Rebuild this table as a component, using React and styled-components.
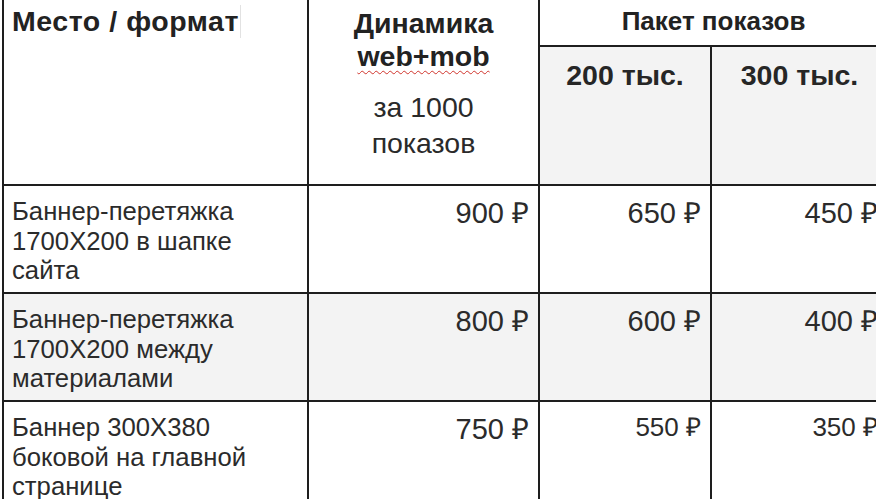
import React from "react";
import styled, { createGlobalStyle } from "styled-components";

const Global = createGlobalStyle`
  html, body {
    margin: 0;
    padding: 0;
    background: #ffffff;
    overflow: hidden;
  }
  body {
    font-family: "Liberation Sans", Arial, sans-serif;
    color: #262626;
  }
`;

const Page = styled.div`
  width: 876px;
  height: 499px;
  overflow: hidden;
  padding-left: 2px;
  box-sizing: border-box;
`;

const Table = styled.table`
  border-collapse: collapse;
  table-layout: fixed;
  width: 885px;
`;

const Cell = styled.td`
  border: 2px solid #1e1e1e;
  padding: 0;
  vertical-align: top;
  background: ${(p) => (p.$shade ? "#f3f3f3" : "#ffffff")};
  text-align: ${(p) => p.$align || "left"};
`;

const HeadCell = styled(Cell).attrs({ as: "th" })`
  border-top: none;
  font-weight: bold;
  color: #222;
`;

const TopRow = styled.tr`
  height: 46px;
`;

const SubRow = styled.tr`
  height: 139px;
`;

const BodyRow = styled.tr`
  height: 108px;
`;

const PlaceTitle = styled.div`
  padding: 5px 0 0 8px;
  font-size: 28.5px;
  letter-spacing: 0.55px;
`;

const Caret = styled.span`
  display: inline-block;
  border-right: 1px solid #e2e2e2;
  padding-right: 1px;
  line-height: 33px;
`;

const DynTitle = styled.div`
  padding-top: 7px;
  font-size: 28.5px;
  line-height: 33px;
`;

const Spell = styled.span`
  text-decoration: underline wavy #d0342c;
  text-decoration-thickness: 1px;
  text-underline-offset: 4px;
`;

const DynNote = styled.div`
  font-weight: normal;
  line-height: 36px;
  margin-top: 16px;
  color: #2a2a2a;
`;

const PackTitle = styled.div`
  font-size: 26px;
  line-height: 30px;
  padding-top: 6px;
`;

const ColTitle = styled.div`
  padding-top: 12px;
  font-size: 28.5px;
  line-height: 32px;
`;

const Name = styled.div`
  padding: 11px 10px 0 8px;
  font-size: 25.7px;
  line-height: 29.5px;
  color: #2b2b2b;
`;

const Price = styled.div`
  padding: ${(p) => (p.$small ? "10px" : "12px")} 9px 0 0;
  line-height: 30px;
  color: #2b2b2b;
  font-size: ${(p) => (p.$small ? "26px" : "29px")};
`;

const rows = [
  {
    name: ["Баннер-перетяжка", "1700X200 в шапке", "сайта"],
    prices: ["900 ₽", "650 ₽", "450 ₽"],
    shade: false,
    small: false,
  },
  {
    name: ["Баннер-перетяжка", "1700X200 между", "материалами"],
    prices: ["800 ₽", "600 ₽", "400 ₽"],
    shade: true,
    small: false,
  },
  {
    name: ["Баннер 300X380", "боковой на главной", "странице"],
    prices: ["750 ₽", "550 ₽", "350 ₽"],
    shade: false,
    small: true,
  },
];

export default function App() {
  return (
    <>
      <Global />
      <Page>
        <Table>
          <colgroup>
            <col style={{ width: 305 }} />
            <col style={{ width: 231 }} />
            <col style={{ width: 172 }} />
            <col style={{ width: 177 }} />
          </colgroup>
          <thead>
            <TopRow>
              <HeadCell rowSpan={2} $align="left">
                <PlaceTitle>
                  <Caret>Место / формат</Caret>
                </PlaceTitle>
              </HeadCell>
              <HeadCell rowSpan={2} $align="center">
                <DynTitle>
                  Динамика
                  <br />
                  <Spell>web+mob</Spell>
                  <DynNote>
                    за 1000
                    <br />
                    показов
                  </DynNote>
                </DynTitle>
              </HeadCell>
              <HeadCell colSpan={2} $align="center">
                <PackTitle>Пакет показов</PackTitle>
              </HeadCell>
            </TopRow>
            <SubRow>
              <Cell as="th" $shade $align="center">
                <ColTitle>200 тыс.</ColTitle>
              </Cell>
              <Cell as="th" $shade $align="center">
                <ColTitle>300 тыс.</ColTitle>
              </Cell>
            </SubRow>
          </thead>
          <tbody>
            {rows.map((r, i) => (
              <BodyRow key={i}>
                <Cell $shade={r.shade}>
                  <Name>
                    {r.name.map((l, j) => (
                      <React.Fragment key={j}>
                        {l}
                        {j < r.name.length - 1 && <br />}
                      </React.Fragment>
                    ))}
                  </Name>
                </Cell>
                {r.prices.map((p, j) => (
                  <Cell key={j} $shade={r.shade} $align="right">
                    <Price $small={r.small && j > 0}>{p}</Price>
                  </Cell>
                ))}
              </BodyRow>
            ))}
          </tbody>
        </Table>
      </Page>
    </>
  );
}
